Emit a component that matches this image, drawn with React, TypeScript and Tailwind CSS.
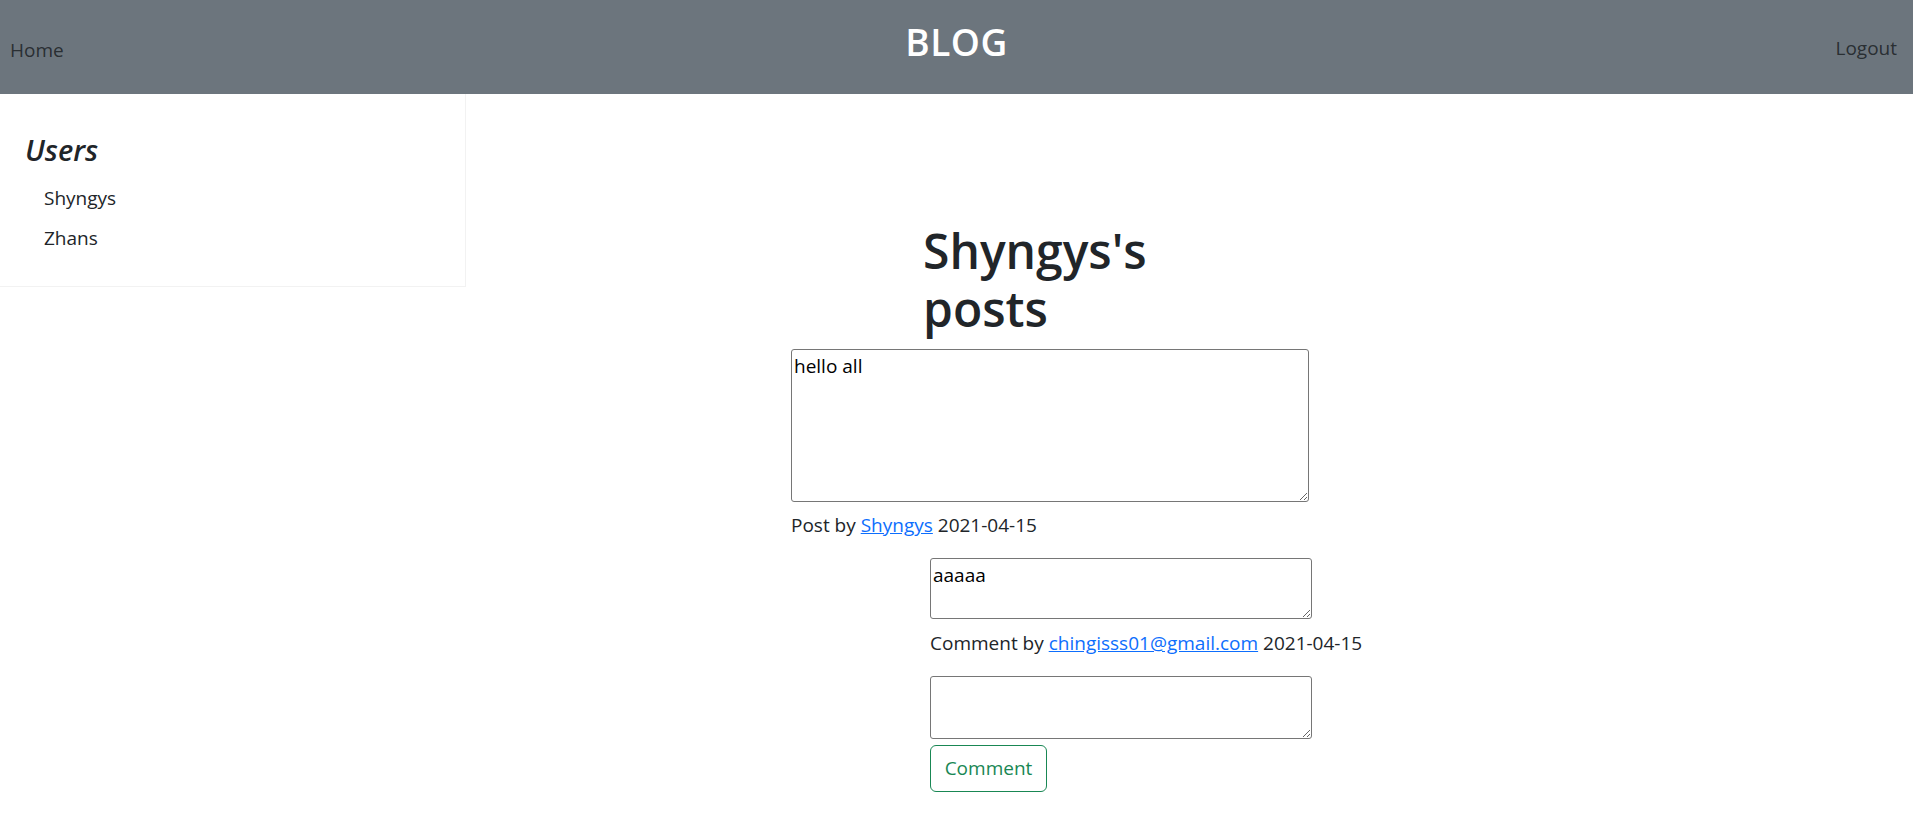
import { useState } from "react";

const USERS = ["Shyngys", "Zhans"];

const font = "font-['Open_Sans',sans-serif]";

export default function App() {
  const [draft, setDraft] = useState("");

  return (
    <div className={`min-h-screen bg-white text-[#212529] ${font}`}>
      {/* top bar */}
      <header className="grid h-[94px] grid-cols-[1fr_auto_1fr] items-center bg-[#6c757d]">
        <a href="#" className="justify-self-start pl-[10px] pt-[6px] text-[19px] text-[#212529]/90">
          Home
        </a>
        <h1 className="pb-[10px] text-[37px] font-semibold tracking-[0.5px] text-white">BLOG</h1>
        <a href="#" className="justify-self-end pr-[16px] pt-[2px] text-[19px] text-[#212529]/90">
          Logout
        </a>
      </header>

      <div className="flex items-start">
        {/* users list */}
        <aside className="h-[193px] w-[466px] shrink-0 border-r border-b border-[#f2f2f2] pt-[38px] pl-[25px]">
          <h4 className="text-[29px] leading-[36px] font-semibold italic">Users</h4>
          <ul className="mt-[10px] pl-[19px] text-[19px]">
            {USERS.map((u) => (
              <li key={u} className="py-[5px] leading-[30px]">
                {u}
              </li>
            ))}
          </ul>
        </aside>

        {/* posts */}
        <main className="ml-[325px] flex flex-col pt-[128px]">
          <h2 className="ml-[132px] w-[260px] text-[48px] leading-[58px] font-semibold">Shyngys's posts</h2>

          <textarea
            defaultValue="hello all"
            className="mt-[11px] h-[153px] w-[518px] rounded-[3px] border border-[#767676] p-[2px] text-[19px] text-black"
          />
          <p className="mt-[8px] text-[19px] leading-[30px]">
            Post by{" "}
            <a href="#" className="text-[#0d6efd] underline">
              Shyngys
            </a>{" "}
            2021-04-15
          </p>

          <div className="ml-[139px] flex flex-col items-start">
            <textarea
              defaultValue="aaaaa"
              className="mt-[18px] h-[61px] w-[382px] rounded-[3px] border border-[#767676] p-[2px] text-[19px] text-black"
            />
            <p className="mt-[9px] whitespace-nowrap text-[19px] leading-[30px]">
              Comment by{" "}
              <a href="#" className="text-[#0d6efd] underline">
                chingisss01@gmail.com
              </a>{" "}
              2021-04-15
            </p>

            <textarea
              value={draft}
              onChange={(e) => setDraft(e.target.value)}
              className="mt-[18px] h-[63px] w-[382px] rounded-[3px] border border-[#767676] p-[2px] text-[19px] text-black"
            />
            <button
              type="button"
              className="mt-[6px] h-[47px] w-[117px] rounded-[6px] border border-[#198754] text-[19px] text-[#198754]"
            >
              Comment
            </button>
          </div>
        </main>
      </div>
    </div>
  );
}
